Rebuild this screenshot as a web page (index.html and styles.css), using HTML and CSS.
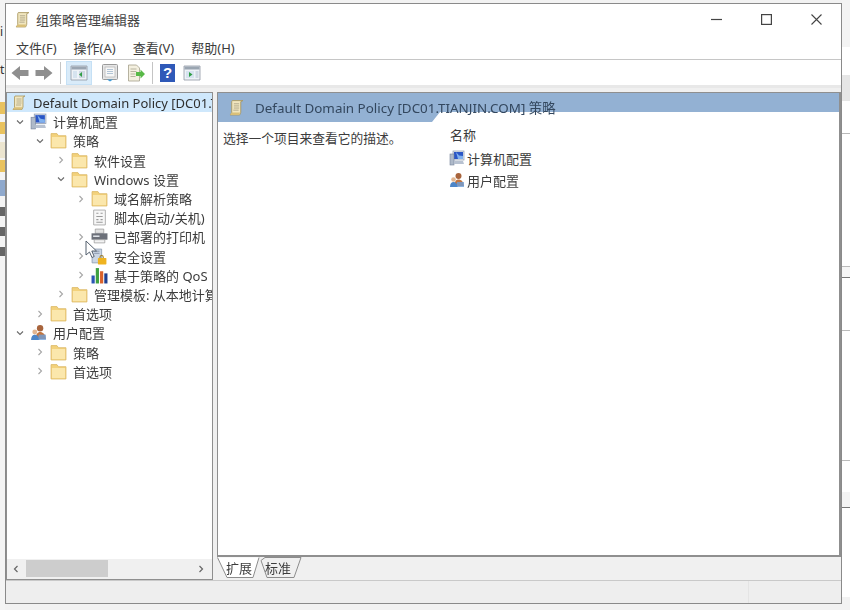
FILE: index.html
```html
<!DOCTYPE html>
<html>
<head>
    <meta charset="utf-8">
    <title>组策略管理编辑器</title>
    <link rel="stylesheet" href="styles.css">
</head>
<body>

<svg class="sprites" width="0" height="0">
    <symbol id="i-scroll" viewBox="0 0 16 16">
        <path d="M4 1.500h10l-2 1v10l-1 2.500H2l1.500-2V2.500z" fill="#f1e6bf" stroke="#a8955c" stroke-width=".8"/>
        <path d="M5.500 4.500h5M5.500 6.500h5M5.500 8.500h5M5 10.500h5" stroke="#a9a184" stroke-width=".8"/>
        <path d="M2 15h8.500l.8-2.200H3.500z" fill="#d9bf78"/>
    </symbol>
    <symbol id="i-folder" viewBox="0 0 16 16">
        <path d="M1 1.500h5.500L8 3.500h7v11.500H1z" fill="#f3d27c" stroke="#dcb968" stroke-width=".8"/>
        <path d="M1.800 4.700h12.400v9.600H1.800z" fill="#fbe7ac"/>
    </symbol>
    <symbol id="i-computer" viewBox="0 0 16 16">
        <rect x="4" y="1" width="11" height="9" fill="#e4e8ef" stroke="#8b98ad" stroke-width=".7"/>
        <path d="M5 2h9v7H5z" fill="#2a56c6"/>
        <path d="M7 2l3 3.500L14 6v3H9z" fill="#7fb0ee"/>
        <rect x="1" y="4" width="4" height="11" fill="#aeb9c9" stroke="#76829a" stroke-width=".6"/>
        <path d="M5 11h9l1 3H5z" fill="#b8c2d1"/>
    </symbol>
    <symbol id="i-users" viewBox="0 0 16 16">
        <circle cx="9.500" cy="4" r="3" fill="#a8643c"/>
        <path d="M5.500 14c0-4.500 1.500-6.500 4-6.500s5 2 5.500 6.500z" fill="#c2753f"/>
        <circle cx="4.500" cy="7.500" r="2.300" fill="#e2b691"/>
        <path d="M1 15c0-3.500 1.500-5 3.500-5s4 1.500 4.500 5z" fill="#4d86c8"/>
        <path d="M8 10h7v5H8z" fill="#6e9fd8" opacity=".8"/>
    </symbol>
    <symbol id="i-script" viewBox="0 0 16 16">
        <path d="M2.500 1h11v14h-11z" fill="#f7f7f7" stroke="#a5a5a5" stroke-width=".8"/>
        <path d="M5 4h2M9 4h2M5 7h6M5 10h2M9 10h2M5 12.500h6" stroke="#9a9a9a"/>
    </symbol>
    <symbol id="i-printer" viewBox="0 0 16 16">
        <path d="M4 1h8v4H4z" fill="#e2e2e2" stroke="#8c8c8c" stroke-width=".6"/>
        <path d="M.5 5h15v6H.5z" fill="#6c7079"/>
        <path d="M2 7h6v1.500H2z" fill="#dfe3e8"/>
        <path d="M3 11h10v3H3z" fill="#f3f3f3" stroke="#8c8c8c" stroke-width=".6"/>
    </symbol>
    <symbol id="i-lock" viewBox="0 0 16 16">
        <path d="M1 1h9v13H1z" fill="#cbd6e4" stroke="#8796aa" stroke-width=".7"/>
        <path d="M3 3h5M3 5h5" stroke="#7f8da3" stroke-width=".8"/>
        <path d="M10 6.500a2 2 0 0 1 2 2V10h-1V8.500a1 1 0 0 0-2 0V10H8V8.500a2 2 0 0 1 2-2z" fill="#9a7b2a"/>
        <rect x="6.500" y="9.500" width="8" height="6" rx=".6" fill="#efb320"/>
    </symbol>
    <symbol id="i-qos" viewBox="0 0 16 16">
        <rect x=".5" y="8" width="3" height="7.500" fill="#2b56b5"/>
        <rect x="4.500" y="1" width="3" height="14.500" fill="#3fa142"/>
        <rect x="8.500" y="4" width="3" height="11.500" fill="#d9622b"/>
        <rect x="12.500" y="6" width="3" height="9.500" fill="#1f3f8f"/>
    </symbol>
    <symbol id="i-chev-right" viewBox="0 0 8 8">
        <path d="M2.500 1l3 3-3 3" fill="none" stroke="#a6a6a6" stroke-width="1.100"/>
    </symbol>
    <symbol id="i-chev-down" viewBox="0 0 8 8">
        <path d="M1 2.500l3 3 3-3" fill="none" stroke="#6a6a6a" stroke-width="1.100"/>
    </symbol>
    <symbol id="i-arrow" viewBox="0 0 18 16">
        <path d="M.5 8L9 1v4h8.500v6H9v4z" fill="#8f8f8f"/>
    </symbol>
    <symbol id="i-pane" viewBox="0 0 18 16">
        <path d="M1 1h16v14H1z" fill="#eef2f7" stroke="#8f98a3" stroke-width=".8"/>
        <path d="M1.500 1.500h15v3h-15z" fill="#9aa5b1"/>
    </symbol>
</svg>

<div class="page">
    <div class="desktop-left">
        <span class="scrap scrap-text">i</span>
        <span class="scrap scrap-text second">ti</span>
        <span class="scrap scrap-folder"></span>
        <span class="scrap scrap-folder"></span>
        <span class="scrap scrap-pale"></span>
        <span class="scrap scrap-folder"></span>
        <span class="scrap scrap-blue"></span>
        <span class="scrap scrap-dark"></span>
        <span class="scrap scrap-dark"></span>
        <span class="scrap scrap-dark"></span>
    </div>

    <div class="window">
        <div class="titlebar">
            <svg class="title-icon"><use href="#i-scroll"/></svg>
            <span class="title-text">组策略管理编辑器</span>
            <div class="window-btns">
                <svg width="11" height="11" viewBox="0 0 11 11"><path d="M0 5.500h11" stroke="#444" stroke-width="1.200"/></svg>
                <svg width="11" height="11" viewBox="0 0 11 11"><rect x=".6" y=".6" width="9.800" height="9.800" fill="none" stroke="#444" stroke-width="1.200"/></svg>
                <svg width="11" height="11" viewBox="0 0 11 11"><path d="M.5.500l10 10M10.500.500l-10 10" stroke="#444" stroke-width="1.100"/></svg>
            </div>
        </div>

        <div class="menubar">
            <span>文件(F)</span>
            <span>操作(A)</span>
            <span>查看(V)</span>
            <span>帮助(H)</span>
        </div>

        <div class="toolbar">
            <svg class="tool-arrow"><use href="#i-arrow"/></svg>
            <svg class="tool-arrow flip"><use href="#i-arrow"/></svg>
            <span class="tool-sep"></span>
            <span class="tool-btn active">
                <svg width="18" height="16" viewBox="0 0 18 16">
                    <use href="#i-pane" width="18" height="16"/>
                    <path d="M9 6h6v7H9z" fill="#cfd8e3"/>
                    <path d="M3 6h4v7H3z" fill="#d6e3ef"/>
                    <path d="M12 7v5l-3-2.500z" fill="#2f9e44"/>
                </svg>
            </span>
            <span class="tool-btn">
                <svg width="16" height="18" viewBox="0 0 16 18">
                    <rect x=".5" y=".5" width="15" height="15" rx="1" fill="#e6e6e6" stroke="#9a9a9a"/>
                    <rect x="3" y="3" width="10" height="10" fill="#f7f7f7" stroke="#b0b0b0" stroke-width=".7"/>
                    <path d="M5 5.500h6M5 7.500h6M5 9.500h6" stroke="#9fb6cc" stroke-width=".8"/>
                    <path d="M5 15.500h6l-3 2z" fill="#3f9bd8"/>
                </svg>
            </span>
            <span class="tool-btn">
                <svg width="18" height="18" viewBox="0 0 18 18">
                    <path d="M1.500 1h8l3 3v13h-11z" fill="#f4f0e0" stroke="#a5a08c" stroke-width=".8"/>
                    <path d="M3.500 5h6M3.500 7.500h6M3.500 10h5M3.500 12.500h5" stroke="#aaa58f" stroke-width=".8"/>
                    <path d="M9 8h4.500V5.500L18 10l-4.500 4.500V12H9z" fill="#58b947"/>
                </svg>
            </span>
            <span class="tool-sep second"></span>
            <span class="tool-help">?</span>
            <span class="tool-btn">
                <svg width="18" height="16" viewBox="0 0 18 16">
                    <use href="#i-pane" width="18" height="16"/>
                    <path d="M3 6h8v7H3z" fill="#d6e3ef"/>
                    <path d="M12.500 6h3v7h-3z" fill="#cfd8e3"/>
                    <path d="M6 7v5l3.500-2.500z" fill="#2f9e44"/>
                </svg>
            </span>
        </div>

        <div class="panes">
            <div class="tree-pane">
                <div class="tree">
                    <div class="row root selected">
                        <svg class="icon"><use href="#i-scroll"/></svg>
                        <span>Default Domain Policy [DC01.TIANJIN.COM] 策略</span>
                    </div>
                    <div class="row lv1">
                        <svg class="chev"><use href="#i-chev-down"/></svg>
                        <svg class="icon"><use href="#i-computer"/></svg>
                        <span>计算机配置</span>
                    </div>
                    <div class="row lv2">
                        <svg class="chev"><use href="#i-chev-down"/></svg>
                        <svg class="icon"><use href="#i-folder"/></svg>
                        <span>策略</span>
                    </div>
                    <div class="row lv3">
                        <svg class="chev"><use href="#i-chev-right"/></svg>
                        <svg class="icon"><use href="#i-folder"/></svg>
                        <span>软件设置</span>
                    </div>
                    <div class="row lv3">
                        <svg class="chev"><use href="#i-chev-down"/></svg>
                        <svg class="icon"><use href="#i-folder"/></svg>
                        <span>Windows 设置</span>
                    </div>
                    <div class="row lv4">
                        <svg class="chev"><use href="#i-chev-right"/></svg>
                        <svg class="icon"><use href="#i-folder"/></svg>
                        <span>域名解析策略</span>
                    </div>
                    <div class="row lv4">
                        <span class="chev"></span>
                        <svg class="icon"><use href="#i-script"/></svg>
                        <span>脚本(启动/关机)</span>
                    </div>
                    <div class="row lv4">
                        <svg class="chev"><use href="#i-chev-right"/></svg>
                        <svg class="icon"><use href="#i-printer"/></svg>
                        <span>已部署的打印机</span>
                    </div>
                    <div class="row lv4">
                        <svg class="chev"><use href="#i-chev-right"/></svg>
                        <svg class="icon"><use href="#i-lock"/></svg>
                        <span>安全设置</span>
                    </div>
                    <div class="row lv4">
                        <svg class="chev"><use href="#i-chev-right"/></svg>
                        <svg class="icon"><use href="#i-qos"/></svg>
                        <span>基于策略的 QoS</span>
                    </div>
                    <div class="row lv3">
                        <svg class="chev"><use href="#i-chev-right"/></svg>
                        <svg class="icon"><use href="#i-folder"/></svg>
                        <span>管理模板: 从本地计算机检索的策略定义</span>
                    </div>
                    <div class="row lv2">
                        <svg class="chev"><use href="#i-chev-right"/></svg>
                        <svg class="icon"><use href="#i-folder"/></svg>
                        <span>首选项</span>
                    </div>
                    <div class="row lv1">
                        <svg class="chev"><use href="#i-chev-down"/></svg>
                        <svg class="icon"><use href="#i-users"/></svg>
                        <span>用户配置</span>
                    </div>
                    <div class="row lv2">
                        <svg class="chev"><use href="#i-chev-right"/></svg>
                        <svg class="icon"><use href="#i-folder"/></svg>
                        <span>策略</span>
                    </div>
                    <div class="row lv2">
                        <svg class="chev"><use href="#i-chev-right"/></svg>
                        <svg class="icon"><use href="#i-folder"/></svg>
                        <span>首选项</span>
                    </div>
                </div>
                <div class="hscroll">
                    <svg width="8" height="8" viewBox="0 0 8 8"><path d="M5.500 1l-3 3 3 3" fill="none" stroke="#666" stroke-width="1.200"/></svg>
                    <span class="thumb"></span>
                    <svg width="8" height="8" viewBox="0 0 8 8"><path d="M2.500 1l3 3-3 3" fill="none" stroke="#666" stroke-width="1.200"/></svg>
                </div>
                <!-- mouse pointer -->
                <svg class="cursor" width="13" height="19" viewBox="0 0 13 19">
                    <path d="M1 1v14l3.500-3 2.500 5.500 2.200-1L6.800 11H11.500z" fill="#fff" stroke="#55606e" stroke-width="1"/>
                </svg>
            </div>

            <div class="right-col">
                <div class="detail-pane">
                    <div class="detail-head">
                        <svg class="icon"><use href="#i-scroll"/></svg>
                        <span>Default Domain Policy [DC01.TIANJIN.COM] 策略</span>
                    </div>
                    <div class="detail-body">
                        <div class="detail-desc">选择一个项目来查看它的描述。</div>
                        <div class="detail-list">
                            <div class="list-head">名称</div>
                            <div class="list-item">
                                <svg class="icon"><use href="#i-computer"/></svg>
                                <span>计算机配置</span>
                            </div>
                            <div class="list-item">
                                <svg class="icon"><use href="#i-users"/></svg>
                                <span>用户配置</span>
                            </div>
                        </div>
                    </div>
                </div>
                <div class="tabs">
                    <svg class="tab-shapes" width="100" height="23" viewBox="0 0 100 23">
                        <path d="M42 .5l-6 20H10L.5.500" fill="#fff" stroke="#8c8c8c"/>
                        <path d="M84 .5l-7 20H50l-6-17 4-3z" fill="#f0f0f0" stroke="#8c8c8c"/>
                    </svg>
                    <span class="tab">扩展</span>
                    <span class="tab">标准</span>
                </div>
            </div>
        </div>

        <div class="statusbar">
            <span class="status-cell"></span>
            <span class="status-cell last"></span>
        </div>
    </div>

    <div class="desktop-right"></div>
</div>

</body>
</html>
```

FILE: styles.css
```css
* {
    box-sizing: border-box;
}

html, body {
    margin: 0;
    height: 100%;
    overflow: hidden;
}

body {
    font-family: "Noto Sans", "Noto Sans CJK SC", sans-serif;
    font-size: 13px;
    color: #3c3c3c;
    background-color: #f2f2f2;
}

.sprites {
    position: absolute;
}

.page {
    display: flex;
    width: 850px;
    height: 610px;
    filter: blur(0.45px);
}

/* bits of the desktop that show around the window */
.desktop-left {
    width: 5px;
    padding-top: 24px;
    display: flex;
    flex-direction: column;
    gap: 2px;
    background-color: #f4f4f4;
    overflow: hidden;
}

.scrap {
    display: block;
    flex: none;
    width: 5px;
    height: 16px;
}

.scrap-text {
    color: #333;
    font-size: 12px;
    line-height: 16px;
}

.scrap-text.second {
    margin-top: 20px;
    margin-bottom: 22px;
}

.scrap-folder {
    height: 12px;
    margin-bottom: 6px;
    background-color: #e9c25e;
}

.scrap-pale {
    background-color: #ece5cf;
}

.scrap-blue {
    background-color: #8fa9cd;
    height: 16px;
}

.scrap-dark {
    background-color: #666;
    height: 9px;
    margin-top: 9px;
}

.desktop-right {
    flex: 1;
    background: linear-gradient(#f3f3f3 0 47px, #fff 47px 75px, #e6e6e6 75px 101px, #fff 101px 133px,
        #b9b9b9 133px 134px, #fff 134px 266px, #bbb 266px 267px, #f6f6f6 267px 277px,
        #777 277px 278px, #fff 278px 330px, #bbb 330px 331px, #fff 331px 460px,
        #bbb 460px 461px, #fff 461px 492px, #f4f4f4 492px 507px, #777 507px 508px,
        #fff 508px 597px, #f2f2f2 597px);
}

.window {
    width: 837px;
    height: 601px;
    margin-top: 3px;
    border: 1px solid #8a8a8a;
    background-color: #f0f0f0;
    display: flex;
    flex-direction: column;
}

.titlebar {
    height: 30px;
    flex: none;
    display: flex;
    align-items: center;
    padding-left: 8px;
    background-color: #fff;
}

.title-icon {
    width: 17px;
    height: 17px;
}

.title-text {
    margin-left: 5px;
    font-size: 13px;
    color: #444;
}

.window-btns {
    margin-left: auto;
    width: 130px;
    padding-right: 19px;
    display: flex;
    justify-content: space-between;
    align-items: center;
}

.menubar {
    height: 26px;
    flex: none;
    display: flex;
    align-items: center;
    gap: 17px;
    padding: 2px 0 0 10px;
    font-size: 13px;
    background-color: #fff;
    border-bottom: 1px solid #c6c6c6;
}

.toolbar {
    height: 28px;
    flex: none;
    display: flex;
    align-items: center;
    padding-left: 5px;
    background-color: #fff;
    border-bottom: 3px solid #e8e8e8;
}

.tool-arrow {
    width: 18px;
    height: 16px;
    margin-right: 6px;
}

.tool-arrow.flip {
    transform: scaleX(-1);
}

.tool-sep {
    width: 1px;
    height: 22px;
    margin: 0 5px 0 1px;
    background-color: #c4c4c4;
}

.tool-sep.second {
    margin: 0 7px 0 3px;
}

.tool-btn {
    width: 26px;
    height: 24px;
    display: flex;
    align-items: center;
    justify-content: center;
}

.tool-btn.active {
    margin-right: 5px;
    background-color: #d9ebf9;
    border: 1px solid #c5e0f5;
}

.tool-help {
    width: 15px;
    height: 18px;
    margin-right: 4px;
    background-color: #2f59b8;
    color: #fff;
    font-family: "Liberation Sans", sans-serif;
    font-weight: bold;
    font-size: 15px;
    line-height: 18px;
    text-align: center;
}

.panes {
    flex: 1;
    min-height: 0;
    display: flex;
    gap: 4px;
    padding: 4px 0 0 0;
}

.tree-pane {
    position: relative;
    width: 207px;
    height: 488px;
    display: flex;
    flex-direction: column;
    border: 1px solid #8f8f8f;
    background-color: #fff;
    overflow: hidden;
}

.tree {
    flex: 1;
    min-height: 0;
    overflow: hidden;
}

.cursor {
    position: absolute;
    left: 78px;
    top: 147px;
}

.row {
    height: 19.2px;
    display: flex;
    align-items: center;
    white-space: nowrap;
}

.row.selected {
    background-color: #cfe8fc;
    color: #2f2f2f;
}

.root {
    padding-left: 4px;
}

.lv1 {
    padding-left: 3px;
}

.lv2 {
    padding-left: 23px;
}

.lv3 {
    padding-left: 44px;
}

.lv4 {
    padding-left: 64px;
}

.chev {
    flex: none;
    width: 20px;
    height: 8px;
}

.icon {
    flex: none;
    width: 17px;
    height: 17px;
    margin-right: 6px;
}

.root .icon {
    width: 16px;
}

.hscroll {
    height: 20px;
    flex: none;
    display: flex;
    align-items: center;
    padding: 0 7px 1px 5px;
    background-color: #f0f0f0;
}

.thumb {
    width: 82px;
    height: 17px;
    margin: 0 auto 0 6px;
    background-color: #cdcdcd;
}

.right-col {
    flex: 1;
    min-width: 0;
    display: flex;
    flex-direction: column;
}

.detail-pane {
    height: 465px;
    flex: none;
    border: 2px solid #8f8f8f;
    border-width: 1px 2px 2px 1px;
    background-color: #fff;
}

.detail-head {
    position: relative;
    height: 30px;
    display: flex;
    align-items: center;
    padding: 0 0 2px 10px;
}

.detail-head::before {
    content: "";
    position: absolute;
    top: 0;
    left: 0;
    right: 0;
    bottom: 0;
    background-color: #93b1d3;
    clip-path: polygon(0 0, 100% 0, 100% 19px, 222px 19px, 214px 29px, 0 29px);
}

.detail-head .icon,
.detail-head span {
    position: relative;
}

.detail-head .icon {
    margin-right: 10px;
}

.detail-head span {
    color: #33475e;
    font-size: 13.4px;
}

.detail-body {
    display: flex;
}

.detail-desc {
    width: 231px;
    padding: 5px 0 0 5px;
    font-size: 12.75px;
}

.detail-list {
    padding-top: 3px;
}

.list-head {
    height: 21px;
    line-height: 18px;
    padding-left: 1px;
}

.list-item {
    height: 22px;
    display: flex;
    align-items: center;
}

.list-item .icon {
    width: 16px;
    height: 16px;
    margin-right: 2px;
}

.tabs {
    position: relative;
    height: 22px;
    display: flex;
    padding-left: 9px;
    gap: 13px;
    line-height: 22px;
}

.tab-shapes {
    position: absolute;
    left: 0;
    top: 0;
}

.tab {
    position: relative;
}

.statusbar {
    height: 23px;
    flex: none;
    display: flex;
    margin-top: 1px;
    border-top: 1px solid #c9c9c9;
    background-color: #eeeeee;
}

.status-cell {
    flex: 1;
    border-right: 1px solid #e4e4e4;
}

.status-cell.last {
    flex: none;
    width: 92px;
    border-right: 0;
}
```
